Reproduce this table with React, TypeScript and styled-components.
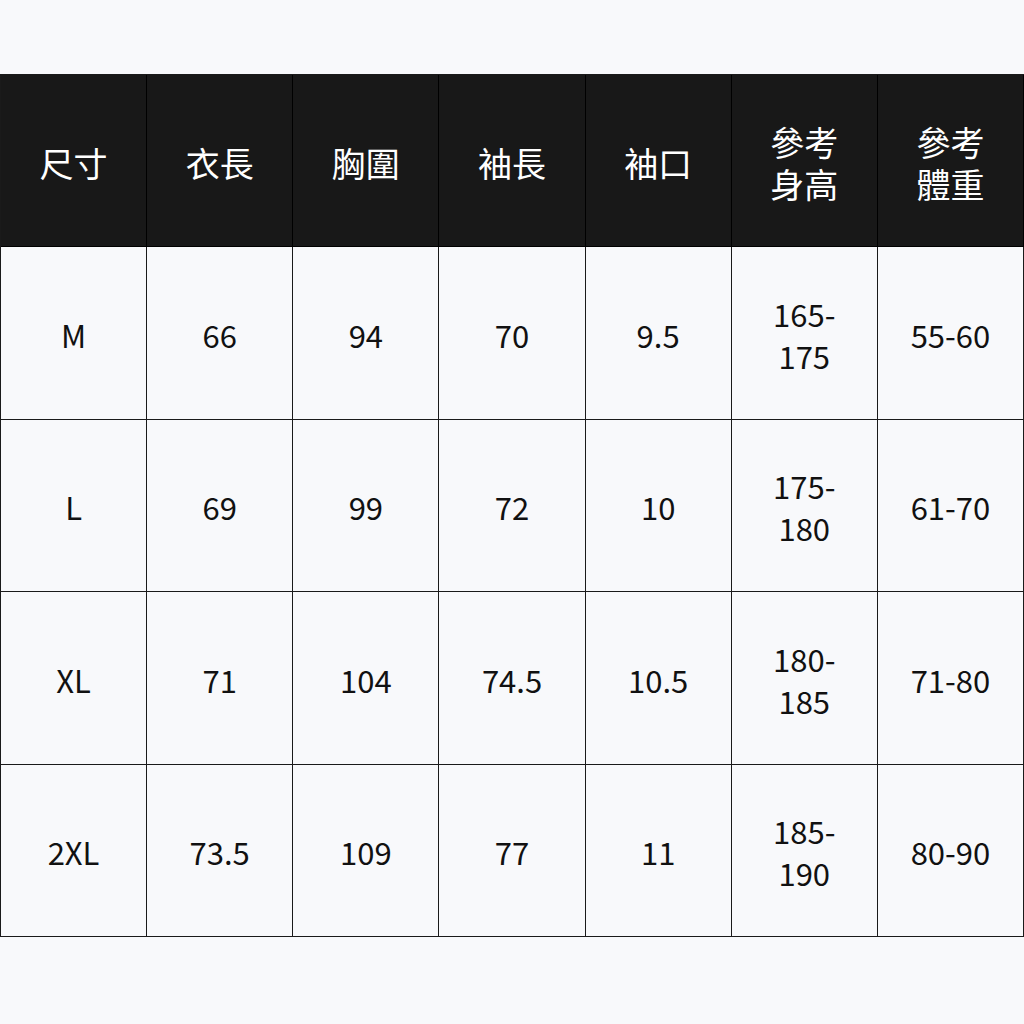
import React from "react";
import styled, { createGlobalStyle } from "styled-components";

const headers = ["尺寸", "衣長", "胸圍", "袖長", "袖口", "參考\n身高", "參考\n體重"];

const rows = [
  ["M", "66", "94", "70", "9.5", "165-\n175", "55-60"],
  ["L", "69", "99", "72", "10", "175-\n180", "61-70"],
  ["XL", "71", "104", "74.5", "10.5", "180-\n185", "71-80"],
  ["2XL", "73.5", "109", "77", "11", "185-\n190", "80-90"],
];

export default function App() {
  return (
    <>
      <GlobalStyle />
      <Page>
        <SizeTable>
          {headers.map((h) => (
            <HeadCell key={h}>{h}</HeadCell>
          ))}
          {rows.map((row, i) =>
            row.map((v, j) => <BodyCell key={`${i}-${j}`}>{v}</BodyCell>)
          )}
        </SizeTable>
      </Page>
    </>
  );
}

const GlobalStyle = createGlobalStyle`
  html, body {
    margin: 0;
    padding: 0;
    background: #f8f9fb;
  }
`;

const Page = styled.div`
  width: 1024px;
  height: 1024px;
  box-sizing: border-box;
  padding-top: 74px;
  font-family: "Noto Sans CJK TC", "Noto Sans", sans-serif;
`;

const SizeTable = styled.div`
  display: grid;
  grid-template-columns: repeat(7, 1fr);
  grid-template-rows: repeat(5, 172.4px);
  border-left: 1px solid #1a1a1a;
  border-top: 1px solid #1a1a1a;
  box-sizing: border-box;
  width: 1024px;
`;

const Cell = styled.div`
  display: flex;
  align-items: center;
  justify-content: center;
  text-align: center;
  white-space: pre-line;
  line-height: 42px;
  padding-top: 4px;
  border-right: 1px solid #1a1a1a;
  border-bottom: 1px solid #1a1a1a;
`;

const HeadCell = styled(Cell)`
  background: #181818;
  color: #ffffff;
  font-size: 34px;
  border-right-color: #000;
  border-bottom-color: #000;
`;

const BodyCell = styled(Cell)`
  color: #111;
  font-size: 31px;
`;
